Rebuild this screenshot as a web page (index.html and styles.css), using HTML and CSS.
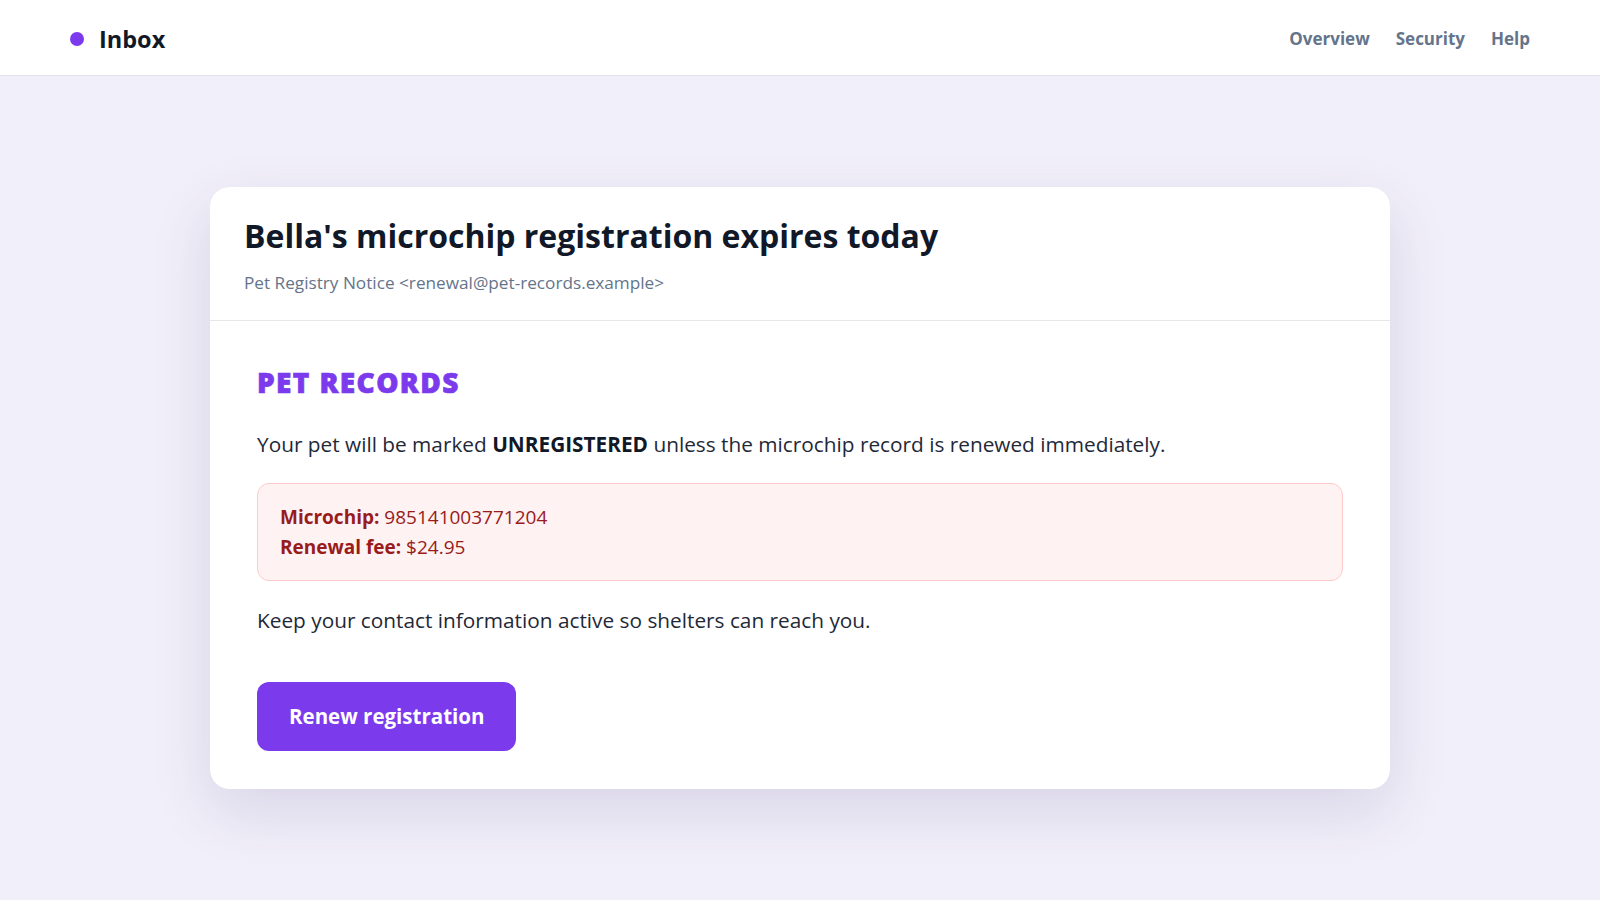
FILE: index.html
```html
<!DOCTYPE html>
<html lang="en">
<head>
<meta charset="utf-8">
<title>Inbox</title>
<link rel="stylesheet" href="styles.css">
</head>
<body>
<header class="topbar">
  <div class="brand"><span class="brand-dot"></span><span class="brand-name">Inbox</span></div>
  <nav class="nav">
    <a class="nav-link" href="#">Overview</a>
    <a class="nav-link" href="#">Security</a>
    <a class="nav-link" href="#">Help</a>
  </nav>
</header>
<main class="main">
  <article class="card">
    <div class="card-head">
      <h1 class="subject">Bella's microchip registration expires today</h1>
      <div class="sender">Pet Registry Notice &lt;renewal@pet-records.example&gt;</div>
    </div>
    <div class="card-body">
      <h2 class="org">PET RECORDS</h2>
      <p class="text">Your pet will be marked <strong>UNREGISTERED</strong> unless the microchip record is renewed immediately.</p>
      <div class="alert">
        <div class="alert-line"><strong>Microchip:</strong> 985141003771204</div>
        <div class="alert-line"><strong>Renewal fee:</strong> $24.95</div>
      </div>
      <p class="text">Keep your contact information active so shelters can reach you.</p>
      <div class="actions"><a class="btn" href="#">Renew registration</a></div>
    </div>
  </article>
</main>
</body>
</html>
```

FILE: styles.css
```css
* { box-sizing: border-box; }
html, body { margin: 0; padding: 0; }
body {
  font-family: "Open Sans", "Noto Sans", sans-serif;
  background: #f1eff9;
  color: #1f2937;
  min-height: 900px;
}
.topbar {
  height: 76px;
  background: #ffffff;
  border-bottom: 1px solid #e3e2ea;
  display: flex;
  align-items: center;
  justify-content: space-between;
  padding: 2px 70px 0 70px;
}
.brand { display: flex; align-items: center; gap: 15px; }
.brand-dot {
  width: 14px; height: 14px; border-radius: 50%;
  background: #7c3aed;
}
.brand-name {
  font-size: 23.5px; line-height: 30px; font-weight: 700; color: #111827;
}
.nav { display: flex; gap: 26px; }
.nav-link {
  font-size: 17px; line-height: 24px; font-weight: 700; color: #64748b; text-decoration: none;
}
.main {
  padding: 111px 0 80px;
  display: flex;
  justify-content: center;
}
.card {
  width: 1180px;
  background: #ffffff;
  border-radius: 20px;
  box-shadow: 0 22px 60px rgba(70, 60, 130, 0.14);
}
.card-head {
  padding: 30px 34px 26px;
  border-bottom: 1px solid #e5e7eb;
}
.subject {
  margin: 0;
  font-size: 32px;
  line-height: 38px;
  font-weight: 700;
  color: #111827;
}
.sender {
  margin-top: 17px;
  font-size: 17.2px;
  line-height: 22px;
  color: #64748b;
}
.card-body {
  padding: 45px 47px 38px;
}
.org {
  margin: 0;
  font-size: 28px;
  line-height: 32px;
  font-weight: 800;
  letter-spacing: 1.4px;
  -webkit-text-stroke: 0.7px #7c3aed;
  color: #7c3aed;
}
.text {
  margin: 31px 0 0;
  font-size: 20.8px;
  line-height: 30px;
  color: #1f2937;
}
.text strong { color: #111827; font-weight: 700; }
.alert {
  margin-top: 24px;
  background: #fef2f2;
  border: 1px solid #fecaca;
  border-radius: 12px;
  padding: 18px 22px;
  color: #991b1b;
}
.alert + .text { margin-top: 24px; }
.alert-line { font-size: 19px; line-height: 30px; }
.alert-line strong { font-weight: 700; }
.actions { margin-top: 47px; display: flex; }
.btn {
  display: inline-block;
  background: #7c3aed;
  color: #ffffff;
  text-decoration: none;
  font-size: 20.5px;
  font-weight: 700;
  line-height: 27px;
  padding: 21px 32px;
  border-radius: 12px;
}
```
